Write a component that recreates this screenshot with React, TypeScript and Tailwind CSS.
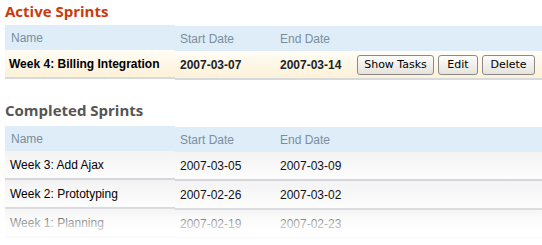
import React from "react";

const headBg = "bg-[#deedf8]";
const headText = "text-[#7b8d9e]";

function Btn({ label, w }: { label: string; w: string }) {
  return (
    <button
      className={`${w} h-[20px] rounded-[3px] border border-[#8a8a8a] bg-gradient-to-b from-[#fdfdfd] to-[#e6e3dc] text-[11px] font-normal text-black leading-none`}
      style={{ fontFamily: '"DejaVu Sans", sans-serif' }}
    >
      {label}
    </button>
  );
}

export default function App() {
  const font = { fontFamily: '"Liberation Sans", Arial, sans-serif' };
  const completed = [
    ["Week 3: Add Ajax", "2007-03-05", "2007-03-09"],
    ["Week 2: Prototyping", "2007-02-26", "2007-03-02"],
    ["Week 1: Planning", "2007-02-19", "2007-02-23"],
  ];
  return (
    <div className="relative w-[542px] h-[245px] overflow-hidden bg-white" style={font}>
      <h2
        className="pl-[5px] pt-[1px] h-[25px] text-[15px] font-bold text-[#cc3a0c] leading-[20px]"
        style={{ fontFamily: '"Open Sans", sans-serif' }}
      >
        Active Sprints
      </h2>
      <div className="flex pl-[5px]">
        <div className="w-[170px] flex flex-col">
          <div className={`h-[25px] ${headBg} ${headText} text-[12px] pl-[6px] flex items-center`}>Name</div>
          <div className="h-[29px] bg-gradient-to-b from-[#fffdf6] to-[#fdf1d8] border-b-2 border-[#d7dadd] pl-[4px] flex items-center text-[12px] font-bold text-black">
            Week 4: Billing Integration
          </div>
        </div>
        <div className="flex-1 flex flex-col mt-px">
          <div className={`h-[25px] ${headBg} ${headText} text-[12px] flex items-center`}>
            <div className="w-[105px] pl-[5px]">Start Date</div>
            <div>End Date</div>
          </div>
          <div className="h-[29px] bg-gradient-to-b from-[#fffdf6] to-[#fdf1d8] border-b-2 border-[#d7dadd] flex items-center text-[12px] font-bold text-[#222]">
            <div className="w-[105px] pl-[5px]">2007-03-07</div>
            <div className="w-[77px]">2007-03-14</div>
            <div className="flex gap-[4px]">
              <Btn label="Show Tasks" w="w-[77px]" />
              <Btn label="Edit" w="w-[40px]" />
              <Btn label="Delete" w="w-[53px]" />
            </div>
          </div>
        </div>
      </div>

      <h2
        className="pl-[5px] mt-[20px] h-[26px] text-[15px] font-bold text-[#555555] leading-[20px]"
        style={{ fontFamily: '"Open Sans", sans-serif' }}
      >
        Completed Sprints
      </h2>
      <div className="flex pl-[5px]">
        <div className="w-[170px] flex flex-col">
          <div className={`h-[25px] ${headBg} ${headText} text-[12px] pl-[6px] flex items-center`}>Name</div>
          {completed.map((r) => (
            <div
              key={r[0]}
              className="h-[29px] bg-gradient-to-b from-[#f3f3f3] to-[#fdfdfd] border-b-2 border-[#d6d6dc] pl-[5px] flex items-center text-[12px] text-black"
            >
              {r[0]}
            </div>
          ))}
        </div>
        <div className="flex-1 flex flex-col mt-px">
          <div className={`h-[25px] ${headBg} ${headText} text-[12px] flex items-center`}>
            <div className="w-[105px] pl-[5px]">Start Date</div>
            <div>End Date</div>
          </div>
          {completed.map((r) => (
            <div
              key={r[1]}
              className="h-[29px] bg-gradient-to-b from-[#f3f3f3] to-[#fdfdfd] border-b-2 border-[#d6d6dc] flex items-center text-[12px] text-[#111]"
            >
              <div className="w-[105px] pl-[5px]">{r[1]}</div>
              <div>{r[2]}</div>
            </div>
          ))}
        </div>
      </div>
      <div className="pointer-events-none absolute left-0 right-0 bottom-0 h-[40px] bg-gradient-to-b from-white/0 via-white/70 to-white" />
    </div>
  );
}
